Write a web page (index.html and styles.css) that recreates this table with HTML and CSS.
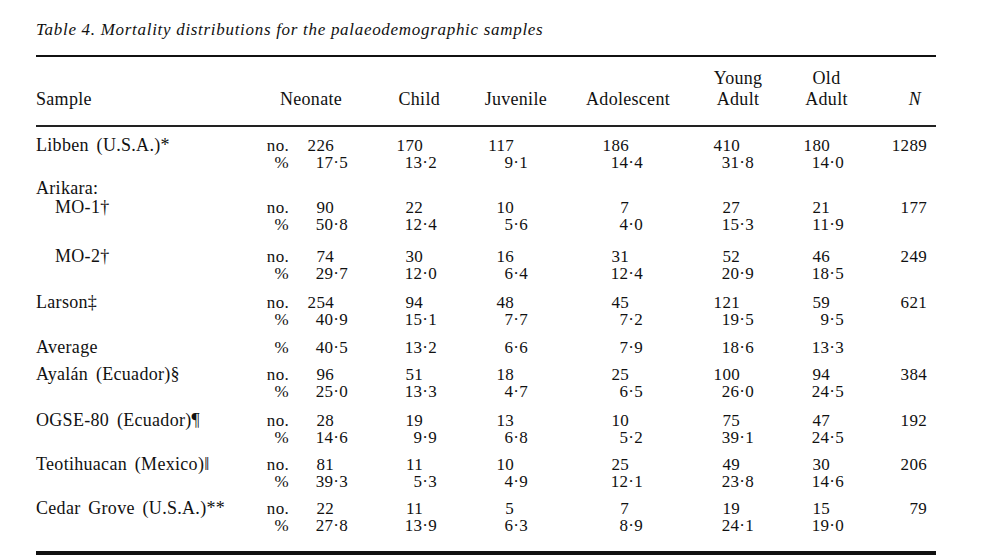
FILE: index.html
```html
<!DOCTYPE html>
<html lang="en">
<head>
<meta charset="utf-8">
<title>Table 4. Mortality distributions</title>
<link rel="stylesheet" href="styles.css">
</head>
<body>
<div class="page">
  <p class="caption">Table 4. Mortality distributions for the palaeodemographic samples</p>
  <table class="mort">
    <colgroup>
      <col class="w-sample"><col class="w-lab"><col class="w-neo"><col class="w-chi"><col class="w-juv"><col class="w-ado"><col class="w-you"><col class="w-old"><col class="w-n">
    </colgroup>
    <thead>
      <tr>
        <th class="h-sample">Sample</th>
        <th class="h-neo" colspan="2">Neonate</th>
        <th class="h-chi">Child</th>
        <th class="h-juv">Juvenile</th>
        <th class="h-ado">Adolescent</th>
        <th class="h-you">Young<br>Adult</th>
        <th class="h-old">Old<br>Adult</th>
        <th class="h-n">N</th>
      </tr>
    </thead>
    <tbody>
      <tr class="g10">
        <td class="name">Libben (U.S.A.)*</td><td class="lab">no.</td>
        <td class="neo int">226</td><td class="chi int">170</td><td class="juv int">117</td><td class="ado int">186</td><td class="you int">410</td><td class="old int">180</td><td class="tot">1289</td>
      </tr>
      <tr>
        <td class="name"></td><td class="lab">%</td>
        <td class="neo">17·5</td><td class="chi">13·2</td><td class="juv">9·1</td><td class="ado">14·4</td><td class="you">31·8</td><td class="old">14·0</td><td class="tot"></td>
      </tr>
      <tr class="g8">
        <td class="name">Arikara:</td><td class="lab"></td>
        <td class="neo"></td><td class="chi"></td><td class="juv"></td><td class="ado"></td><td class="you"></td><td class="old"></td><td class="tot"></td>
      </tr>
      <tr class="g1">
        <td class="name sub">MO-1†</td><td class="lab">no.</td>
        <td class="neo int">90</td><td class="chi int">22</td><td class="juv int">10</td><td class="ado int">7</td><td class="you int">27</td><td class="old int">21</td><td class="tot">177</td>
      </tr>
      <tr>
        <td class="name"></td><td class="lab">%</td>
        <td class="neo">50·8</td><td class="chi">12·4</td><td class="juv">5·6</td><td class="ado">4·0</td><td class="you">15·3</td><td class="old">11·9</td><td class="tot"></td>
      </tr>
      <tr class="g17">
        <td class="name sub">MO-2†</td><td class="lab">no.</td>
        <td class="neo int">74</td><td class="chi int">30</td><td class="juv int">16</td><td class="ado int">31</td><td class="you int">52</td><td class="old int">46</td><td class="tot">249</td>
      </tr>
      <tr>
        <td class="name"></td><td class="lab">%</td>
        <td class="neo">29·7</td><td class="chi">12·0</td><td class="juv">6·4</td><td class="ado">12·4</td><td class="you">20·9</td><td class="old">18·5</td><td class="tot"></td>
      </tr>
      <tr class="g11">
        <td class="name">Larson‡</td><td class="lab">no.</td>
        <td class="neo int">254</td><td class="chi int">94</td><td class="juv int">48</td><td class="ado int">45</td><td class="you int">121</td><td class="old int">59</td><td class="tot">621</td>
      </tr>
      <tr>
        <td class="name"></td><td class="lab">%</td>
        <td class="neo">40·9</td><td class="chi">15·1</td><td class="juv">7·7</td><td class="ado">7·2</td><td class="you">19·5</td><td class="old">9·5</td><td class="tot"></td>
      </tr>
      <tr class="g10">
        <td class="name">Average</td><td class="lab">%</td>
        <td class="neo">40·5</td><td class="chi">13·2</td><td class="juv">6·6</td><td class="ado">7·9</td><td class="you">18·6</td><td class="old">13·3</td><td class="tot"></td>
      </tr>
      <tr class="g10">
        <td class="name">Ayalán (Ecuador)§</td><td class="lab">no.</td>
        <td class="neo int">96</td><td class="chi int">51</td><td class="juv int">18</td><td class="ado int">25</td><td class="you int">100</td><td class="old int">94</td><td class="tot">384</td>
      </tr>
      <tr>
        <td class="name"></td><td class="lab">%</td>
        <td class="neo">25·0</td><td class="chi">13·3</td><td class="juv">4·7</td><td class="ado">6·5</td><td class="you">26·0</td><td class="old">24·5</td><td class="tot"></td>
      </tr>
      <tr class="g11">
        <td class="name">OGSE-80 (Ecuador)¶</td><td class="lab">no.</td>
        <td class="neo int">28</td><td class="chi int">19</td><td class="juv int">13</td><td class="ado int">10</td><td class="you int">75</td><td class="old int">47</td><td class="tot">192</td>
      </tr>
      <tr>
        <td class="name"></td><td class="lab">%</td>
        <td class="neo">14·6</td><td class="chi">9·9</td><td class="juv">6·8</td><td class="ado">5·2</td><td class="you">39·1</td><td class="old">24·5</td><td class="tot"></td>
      </tr>
      <tr class="g9">
        <td class="name">Teotihuacan (Mexico)‖</td><td class="lab">no.</td>
        <td class="neo int">81</td><td class="chi int">11</td><td class="juv int">10</td><td class="ado int">25</td><td class="you int">49</td><td class="old int">30</td><td class="tot">206</td>
      </tr>
      <tr>
        <td class="name"></td><td class="lab">%</td>
        <td class="neo">39·3</td><td class="chi">5·3</td><td class="juv">4·9</td><td class="ado">12·1</td><td class="you">23·8</td><td class="old">14·6</td><td class="tot"></td>
      </tr>
      <tr class="g9">
        <td class="name">Cedar Grove (U.S.A.)**</td><td class="lab">no.</td>
        <td class="neo int">22</td><td class="chi int">11</td><td class="juv int">5</td><td class="ado int">7</td><td class="you int">19</td><td class="old int">15</td><td class="tot">79</td>
      </tr>
      <tr class="last">
        <td class="name"></td><td class="lab">%</td>
        <td class="neo">27·8</td><td class="chi">13·9</td><td class="juv">6·3</td><td class="ado">8·9</td><td class="you">24·1</td><td class="old">19·0</td><td class="tot"></td>
      </tr>
    </tbody>
  </table>
</div>
</body>
</html>
```

FILE: styles.css
```css
html, body {
  margin: 0;
  padding: 0;
  background: #fff;
}

body {
  font-family: "Liberation Serif", "Times New Roman", serif;
  color: #111;
}

.page {
  width: 900px;
  padding: 20px 0 0 36px;
}

.caption {
  margin: 0;
  font-style: italic;
  font-size: 17px;
  line-height: 20px;
  letter-spacing: 0.7px;
  height: 35px;
}

.mort {
  width: 900px;
  border-collapse: collapse;
  table-layout: fixed;
  font-size: 18px;
  letter-spacing: 0.3px;
  word-spacing: 3px;
}

.w-sample { width: 214px; }
.w-lab { width: 42px; }
.w-neo { width: 68px; }
.w-chi { width: 100px; }
.w-juv { width: 110px; }
.w-ado { width: 120px; }
.w-you { width: 90px; }
.w-old { width: 90px; }
.w-n { width: 66px; }

.mort th {
  font-weight: normal;
  line-height: 21px;
  vertical-align: bottom;
  padding: 11px 0 15px 0;
  border-top: 2px solid #111;
  border-bottom: 2px solid #222;
  white-space: nowrap;
}

.h-sample { text-align: left; }
.h-neo { text-align: right; padding-right: 18px !important; }
.h-chi { text-align: right; padding-right: 20px !important; }
.h-juv { text-align: right; padding-right: 23px !important; }
.h-ado { text-align: right; padding-right: 20px !important; }
.h-you { text-align: center; padding-left: 6px !important; }
.h-old { text-align: center; padding-left: 3px !important; }
.h-n { text-align: right; padding-right: 15px !important; font-style: italic; }

.mort td {
  padding: 0;
  line-height: 17.4px;
  white-space: nowrap;
  vertical-align: top;
}

.mort tr.g1 td { padding-top: 1.5px; }
.mort tr.g8 td { padding-top: 8px; }
.mort tr.g9 td { padding-top: 9px; }
.mort tr.g10 td { padding-top: 10px; }
.mort tr.g11 td { padding-top: 11px; }
.mort tr.g17 td { padding-top: 14.5px; }
.mort tr.last td { padding-bottom: 17px; border-bottom: 4px solid #111; }

.name { text-align: left; }
.name.sub { padding-left: 19px !important; }

.lab {
  text-align: right;
  padding-right: 3px !important;
  font-size: 17px;
}

.neo, .chi, .juv, .ado, .you, .old, .tot {
  text-align: right;
  font-size: 17px;
}

.neo { --pr: 12px; }
.chi { --pr: 23px; }
.juv { --pr: 42px; }
.ado { --pr: 47px; }
.you { --pr: 26px; }
.old { --pr: 26px; }

.mort td.neo, .mort td.chi, .mort td.juv, .mort td.ado, .mort td.you, .mort td.old {
  padding-right: var(--pr);
}

.mort td.int {
  padding-right: calc(var(--pr) + 14px);
}

.mort td.tot { padding-right: 9px; }
```
